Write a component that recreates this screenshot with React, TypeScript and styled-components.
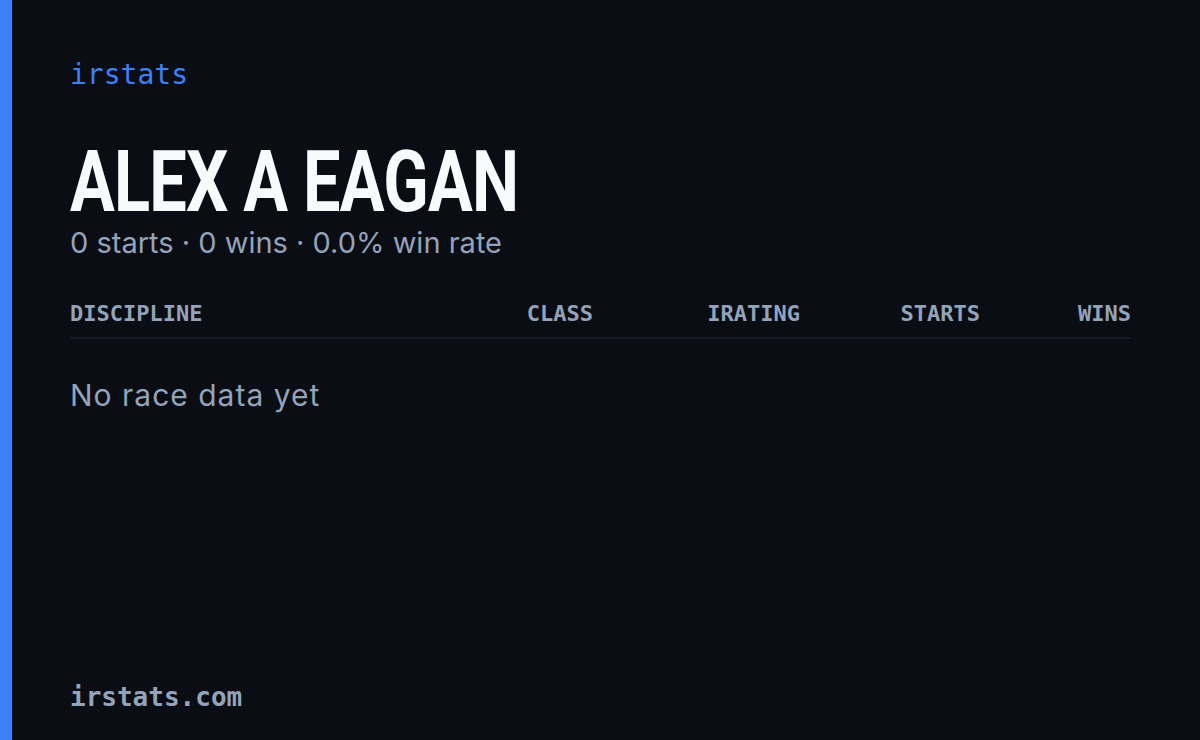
import React from "react";
import styled, { createGlobalStyle } from "styled-components";

const GlobalStyle = createGlobalStyle`
  html, body {
    margin: 0;
    padding: 0;
    background: #0a0d14;
  }
`;

const Page = styled.div`
  width: 1200px;
  height: 740px;
  display: flex;
  background: #0a0d14;
  overflow: hidden;
`;

const Stripe = styled.div`
  width: 12px;
  flex-shrink: 0;
  background: #3b82f6;
`;

const Content = styled.div`
  flex: 1;
  display: flex;
  flex-direction: column;
  padding: 57px 69px 26px 58px;
`;

const Brand = styled.div`
  font-family: "DejaVu Sans Mono", monospace;
  font-size: 28px;
  line-height: 36px;
  color: #3b82f6;
  font-weight: 400;
`;

const Title = styled.h1`
  margin: 53px 0 0;
  font-family: "Roboto", "Liberation Sans", sans-serif;
  font-weight: 700;
  font-size: 86px;
  line-height: 72px;
  color: #f8fafc;
  letter-spacing: -1px;
  transform: scaleX(0.775);
  transform-origin: left center;
  white-space: nowrap;
`;

const Summary = styled.div`
  margin-top: 7px;
  font-family: "Inter", sans-serif;
  font-size: 29px;
  line-height: 36px;
  color: #94a3b8;
`;

const TableHead = styled.div`
  margin-top: 39px;
  display: grid;
  grid-template-columns: 1fr 120px 207px 180px 151px;
  padding-bottom: 9px;
  border-bottom: 2px solid #161a24;
`;

const HeadCell = styled.div<{ $left?: boolean }>`
  font-family: "DejaVu Sans Mono", monospace;
  font-weight: 700;
  font-size: 22px;
  line-height: 28px;
  color: #94a3b8;
  text-align: ${(p) => (p.$left ? "left" : "right")};
`;

const Empty = styled.div`
  margin-top: 36px;
  font-family: "Inter", sans-serif;
  font-size: 30px;
  letter-spacing: 1px;
  line-height: 40px;
  color: #94a3b8;
`;

const Footer = styled.div`
  margin-top: auto;
  font-family: "DejaVu Sans Mono", monospace;
  font-weight: 700;
  font-size: 26px;
  line-height: 34px;
  color: #94a3b8;
`;

export default function App() {
  const columns = ["DISCIPLINE", "CLASS", "IRATING", "STARTS", "WINS"];
  return (
    <>
      <GlobalStyle />
      <Page>
        <Stripe />
        <Content>
          <Brand>irstats</Brand>
          <Title>ALEX A EAGAN</Title>
          <Summary>0 starts · 0 wins · 0.0% win rate</Summary>
          <TableHead>
            {columns.map((c, i) => (
              <HeadCell key={c} $left={i === 0}>
                {c}
              </HeadCell>
            ))}
          </TableHead>
          <Empty>No race data yet</Empty>
          <Footer>irstats.com</Footer>
        </Content>
      </Page>
    </>
  );
}
